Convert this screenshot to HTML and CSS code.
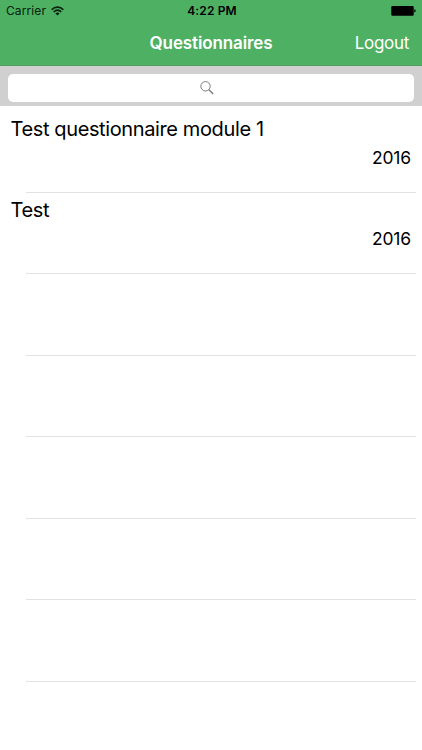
FILE: index.html
```
<!DOCTYPE html>
<html lang="en">
<head>
	<meta charset="UTF-8">
	<title>Questionnaires</title>
	<link rel="stylesheet" href="styles.css">
</head>
<body>
	<header class="header">
		<div class="status">
			<div class="carrier">
				<span>Carrier</span>
				<svg class="wifi" width="13" height="10" viewBox="0 0 13 10" fill="none" stroke="#06210c" stroke-width="1.6">
					<path d="M0.6 3.7C4 0.3 9 0.3 12.4 3.7"/>
					<path d="M2.7 5.9C5 3.7 8 3.7 10.3 5.9"/>
					<path d="M6.5 9.6L4.4 7.5C5.6 6.3 7.4 6.3 8.6 7.5Z" fill="#06210c" stroke="none"/>
				</svg>
			</div>
			<span class="time">4:22 PM</span>
			<svg class="battery" width="25" height="10" viewBox="0 0 25 10">
				<rect x="0.3" y="0" width="22.4" height="9.7" rx="1"/>
				<path d="M23.3 3.2C25.2 3.5 25.2 6.2 23.3 6.5Z"/>
			</svg>
		</div>
		<nav class="nav">
			<h1 class="title">Questionnaires</h1>
			<a class="logout">Logout</a>
		</nav>
	</header>
	<div class="search">
		<div class="field">
			<svg width="14" height="14" viewBox="0 0 14 14" fill="none" stroke="#7c7c80">
				<circle cx="5.5" cy="5.3" r="4.7"/>
				<path d="M8.9 8.7L13.2 13" stroke-width="1.4"/>
			</svg>
		</div>
	</div>
	<ul class="list">
		<li class="row">
			<p class="name">Test questionnaire module 1</p>
			<p class="year">2016</p>
		</li>
		<li class="row">
			<p class="name">Test</p>
			<p class="year">2016</p>
		</li>
		<li class="row"></li>
		<li class="row"></li>
		<li class="row"></li>
		<li class="row"></li>
		<li class="row"></li>
	</ul>
</body>
</html>
```
FILE: styles.css
```
* {
	margin: 0;
	padding: 0;
	box-sizing: border-box;
}
body {
	background: #fff;
	color: #000;
	font-family: Inter, sans-serif;
	height: 750px;
	overflow: hidden;
}
.header {
	height: 66px;
	background: #4eb063;
	border-bottom: 1px solid #559a63;
}
.status {
	height: 21px;
	padding: 0 6px;
	display: grid;
	grid-template-columns: 1fr auto 1fr;
	align-items: center;
	font-size: 12px;
}
.carrier {
	display: flex;
	align-items: center;
	gap: 5px;
	color: #06210c;
	letter-spacing: 0.1px;
}
.time {
	font-weight: 600;
	letter-spacing: 0.15px;
	padding-left: 2px;
}
.battery {
	justify-self: end;
}
.nav {
	height: 44px;
	padding: 0 13px;
	display: grid;
	grid-template-columns: 1fr auto 1fr;
	align-items: center;
	color: #fff;
}
.title {
	grid-column: 2;
	font-size: 17px;
	font-weight: 600;
	letter-spacing: -0.12px;
}
.logout {
	justify-self: end;
	font-size: 17px;
	letter-spacing: -0.3px;
}
.search {
	height: 40px;
	padding: 8px 8px 4px;
	background: #d0d0d0;
}
.field {
	height: 28px;
	padding-right: 8px;
	border-radius: 5px;
	background: #fff;
	display: flex;
	align-items: center;
	justify-content: center;
}
.list {
	list-style: none;
	padding-top: 5px;
}
.row {
	height: 81.5px;
	padding: 4.6px 11px 0;
	background: linear-gradient(#e2e2e4, #e2e2e4) 26px 100% / 390px 1px no-repeat;
}
.name {
	font-size: 20px;
	line-height: 26px;
	letter-spacing: -0.38px;
	margin-left: -0.5px;
}
.year {
	font-size: 17.5px;
	line-height: 31px;
	letter-spacing: -0.15px;
	text-align: right;
}
```
